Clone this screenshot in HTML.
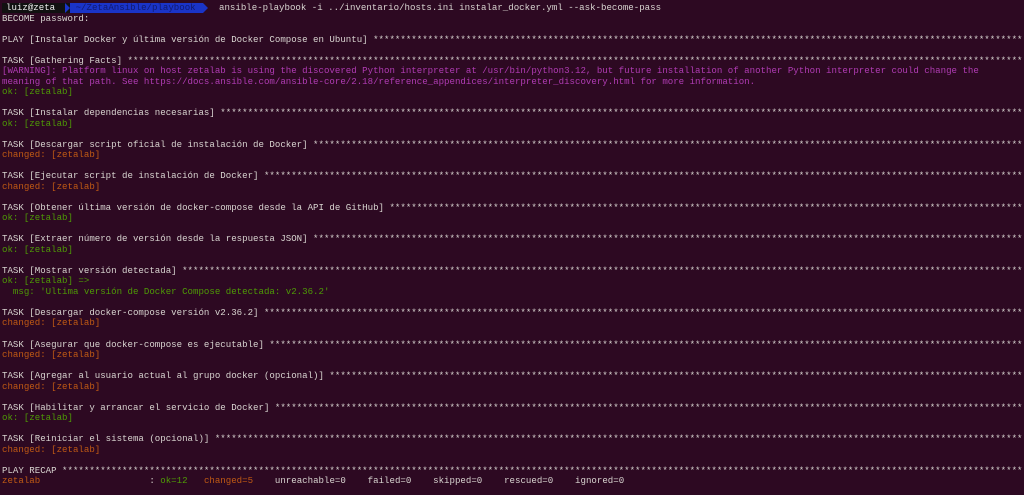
<!DOCTYPE html>
<html><head><meta charset="utf-8"><style>
html,body{margin:0;padding:0;background:#2d0922;width:1024px;height:495px;overflow:hidden}
#t{position:absolute;left:2px;top:3px;font-family:"Liberation Mono",monospace;font-size:9.1px;line-height:10.53px;color:#d8d4d0}
#t div{height:10.53px;width:1020px;overflow:hidden;white-space:pre}
.g{color:#4e9a06}.o{color:#c05a14}.m{color:#b03cb4}
.p1{background:#111;color:#eee;padding:0 4px}
.p2{background:#1a34c8;color:#101a70;padding:0 2px 0 6px}
.ar{display:inline-block;width:0;height:0;border-top:5.3px solid transparent;border-bottom:5.3px solid transparent;vertical-align:top}
</style></head><body>
<div id="t"><div><span class="p1">luiz@zeta </span><span class="ar" style="border-left:5px solid #1a34c8;background:#111"></span><span class="p2">~/ZetaAnsible/playbook </span><span class="ar" style="border-left:5px solid #1a34c8"></span>  ansible-playbook -i ../inventario/hosts.ini instalar_docker.yml --ask-become-pass</div><div>BECOME password:</div><div> </div><div class="s">PLAY [Instalar Docker y última versión de Docker Compose en Ubuntu] </div><div> </div><div class="s">TASK [Gathering Facts] </div><div class="m">[WARNING]: Platform linux on host zetalab is using the discovered Python interpreter at /usr/bin/python3.12, but future installation of another Python interpreter could change the</div><div class="m">meaning of that path. See https://docs.ansible.com/ansible-core/2.18/reference_appendices/interpreter_discovery.html for more information.</div><div class="g">ok: [zetalab]</div><div> </div><div class="s">TASK [Instalar dependencias necesarias] </div><div class="g">ok: [zetalab]</div><div> </div><div class="s">TASK [Descargar script oficial de instalación de Docker] </div><div class="o">changed: [zetalab]</div><div> </div><div class="s">TASK [Ejecutar script de instalación de Docker] </div><div class="o">changed: [zetalab]</div><div> </div><div class="s">TASK [Obtener última versión de docker-compose desde la API de GitHub] </div><div class="g">ok: [zetalab]</div><div> </div><div class="s">TASK [Extraer número de versión desde la respuesta JSON] </div><div class="g">ok: [zetalab]</div><div> </div><div class="s">TASK [Mostrar versión detectada] </div><div class="g">ok: [zetalab] =&gt;</div><div class="g">  msg: 'Última versión de Docker Compose detectada: v2.36.2'</div><div> </div><div class="s">TASK [Descargar docker-compose versión v2.36.2] </div><div class="o">changed: [zetalab]</div><div> </div><div class="s">TASK [Asegurar que docker-compose es ejecutable] </div><div class="o">changed: [zetalab]</div><div> </div><div class="s">TASK [Agregar al usuario actual al grupo docker (opcional)] </div><div class="o">changed: [zetalab]</div><div> </div><div class="s">TASK [Habilitar y arrancar el servicio de Docker] </div><div class="g">ok: [zetalab]</div><div> </div><div class="s">TASK [Reiniciar el sistema (opcional)] </div><div class="o">changed: [zetalab]</div><div> </div><div class="s">PLAY RECAP </div><div><span class="o">zetalab</span>                    : <span class="g">ok=12</span>   <span class="o">changed=5</span>    unreachable=0    failed=0    skipped=0    rescued=0    ignored=0</div></div>
<script>
var st='*'.repeat(200);
document.querySelectorAll('.s').forEach(function(e){e.textContent+=st;});
</script>
</body></html>
